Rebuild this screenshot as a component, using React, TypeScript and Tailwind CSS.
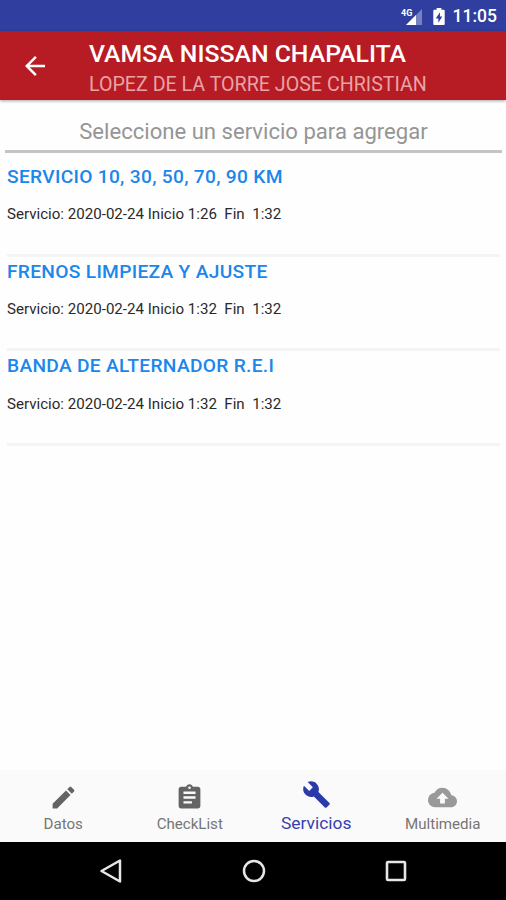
import type { ComponentType } from "react"
import { MdArrowBack, MdCloudUpload, MdEdit } from "react-icons/md"

interface Service {
  name: string
  date: string
  start: string
  end: string
}

interface Tab {
  label: string
  icon: ComponentType<{ className?: string }>
  iconClass: string
  active?: boolean
}

function WrenchIcon({ className }: { className?: string }) {
  return (
    <svg className={className} viewBox="0 0 24 24" fill="currentColor">
      <path d="M22.7 19l-9.1-9.1c.9-2.3.4-5-1.5-6.9-2-2-5-2.4-7.4-1.3L9 6 6 9 1.6 4.7C.4 7.1.9 10.1 2.9 12.1c1.9 1.9 4.6 2.4 6.9 1.5l9.1 9.1c.4.4 1 .4 1.4 0l2.3-2.3c.5-.4.5-1.1.1-1.4z" />
    </svg>
  )
}

function ClipboardIcon({ className }: { className?: string }) {
  return (
    <svg className={className} viewBox="0 0 24 24" fill="currentColor">
      <path
        fillRule="evenodd"
        d="M19 3h-4.18C14.4 1.84 13.3 1 12 1s-2.4.84-2.82 2H5c-1.1 0-2 .9-2 2v14c0 1.1.9 2 2 2h14c1.1 0 2-.9 2-2V5c0-1.1-.9-2-2-2ZM12 2.8a1.1 1.1 0 1 1 0 2.2 1.1 1.1 0 0 1 0-2.2ZM7 7h10v2H7ZM7 11h10v2H7ZM7 15h7v2H7Z"
      />
    </svg>
  )
}

const services: Service[] = [
  { name: "SERVICIO 10, 30, 50, 70, 90 KM", date: "2020-02-24", start: "1:26", end: "1:32" },
  { name: "FRENOS LIMPIEZA Y AJUSTE", date: "2020-02-24", start: "1:32", end: "1:32" },
  { name: "BANDA DE ALTERNADOR R.E.I", date: "2020-02-24", start: "1:32", end: "1:32" }
]

const tabs: Tab[] = [
  { label: "Datos", icon: MdEdit, iconClass: "text-[#646464]" },
  { label: "CheckList", icon: ClipboardIcon, iconClass: "text-[#646464]" },
  { label: "Servicios", icon: WrenchIcon, iconClass: "text-[#2a3aa8]", active: true },
  { label: "Multimedia", icon: MdCloudUpload, iconClass: "text-[#999999]" }
]

function StatusBar() {
  return (
    <div className="flex h-[31px] shrink-0 items-center justify-end bg-[#303f9f] pr-[9px] text-white">
      {/* Signal */}
      <svg className="mt-px h-[19px] w-[23px]" viewBox="0 0 23 19">
        <path d="M21 2V18H5Z" fill="#fff" fillOpacity="0.35" />
        <path d="M15 8V18H5Z" fill="#fff" />
        <text x="0" y="9" fill="#fff" fontSize="9" fontWeight="700" fontFamily="Roboto, sans-serif">4G</text>
      </svg>
      {/* Battery */}
      <svg className="mt-px ml-[8px] h-[19px] w-[14px]" viewBox="0 0 14 20">
        <path
          fillRule="evenodd"
          fill="#fff"
          d="M4.5 1h5v2H12c.6 0 1 .4 1 1v14c0 .6-.4 1-1 1H2c-.6 0-1-.4-1-1V4c0-.6.4-1 1-1h2.5ZM8 5.5 3.5 12H6.3V16.5L10.5 10H8Z"
        />
      </svg>
      <span className="ml-[7px] pt-[2px] text-[17.5px] leading-[31px] font-medium">11:05</span>
    </div>
  )
}

function Header() {
  return (
    <header className="z-10 flex h-[69px] shrink-0 bg-[#b71c24] shadow-[0_1px_3px_rgba(0,0,0,0.35)]">
      <button className="flex w-[89px] items-center pl-[20px] text-white">
        <MdArrowBack className="size-[30px]" />
      </button>
      <div className="pt-[8px]">
        <h1 className="text-[24.8px] leading-[30px] font-medium whitespace-nowrap text-white">VAMSA NISSAN CHAPALITA</h1>
        <p className="pt-px text-[19.65px] leading-[29px] whitespace-nowrap text-[#e9a3a5]">LOPEZ DE LA TORRE JOSE CHRISTIAN</p>
      </div>
    </header>
  )
}

function ServiceRow({ service }: { service: Service }) {
  return (
    <li className="mr-[6px] ml-[7px] h-[94.6px] border-b-[3px] border-[#f4f4f4]">
      <h2 className="pt-px text-[19.2px] leading-[28px] font-medium tracking-[0.29px] whitespace-nowrap text-[#1a87ec]">
        {service.name}
      </h2>
      <p className="pt-[12.4px] text-[15.1px] leading-[22px] whitespace-pre text-[#2a2a2a]">
        {`Servicio: ${service.date} Inicio ${service.start}  Fin  ${service.end}`}
      </p>
    </li>
  )
}

function BottomTabs() {
  return (
    <nav className="grid h-[72px] shrink-0 grid-cols-4 bg-[#fafafa]">
      {tabs.map(({ label, icon: Icon, iconClass, active }) => (
        <button key={label} className={`flex flex-col items-center ${active ? "pt-[10px]" : "pt-[13px]"}`}>
          <Icon className={`size-[29px] ${iconClass}`} />
          <span
            className={
              active
                ? "text-[17.4px] leading-[28px] text-[#3640ae]"
                : "text-[15.1px] leading-[24px] text-[#757575]"
            }
          >
            {label}
          </span>
        </button>
      ))}
    </nav>
  )
}

function SystemNav() {
  return (
    <div className="flex h-[58px] shrink-0 items-center justify-center gap-[116px] bg-black pl-[2px] text-[#e6e6e6]">
      <svg className="size-[26px]" viewBox="0 0 26 26" fill="none" stroke="currentColor" strokeWidth="2.5">
        <path d="M21 2.5v21L2.5 13Z" strokeLinejoin="round" />
      </svg>
      <svg className="size-[26px]" viewBox="0 0 26 26" fill="none" stroke="currentColor" strokeWidth="2.5">
        <circle cx="13" cy="13" r="10" />
      </svg>
      <svg className="size-[26px]" viewBox="0 0 26 26" fill="none" stroke="currentColor" strokeWidth="2.6">
        <rect x="4" y="4" width="18" height="18" rx="1" />
      </svg>
    </div>
  )
}

export default function App() {
  return (
    <div className="flex h-[900px] w-[506px] flex-col overflow-hidden bg-[#fefefe] font-[Roboto,sans-serif]">
      <StatusBar />
      <Header />
      <main className="flex-1">
        <div className="mr-[4px] ml-[5px] h-[53px] border-b-[3px] border-[#c4c4c4] pt-[15px] text-center text-[22.1px] leading-[32px] text-[#959595]">
          Seleccione un servicio para agregar
        </div>
        <ul className="pt-[9px]">
          {services.map((service) => (
            <ServiceRow key={service.name} service={service} />
          ))}
        </ul>
      </main>
      <BottomTabs />
      <SystemNav />
    </div>
  )
}
